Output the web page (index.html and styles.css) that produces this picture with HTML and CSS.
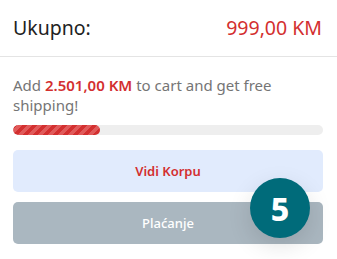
FILE: index.html
```html
<!DOCTYPE html>
<html lang="en">
<head>
  <meta charset="UTF-8" />
  <meta name="viewport" content="width=device-width, initial-scale=1.0"/>
  <title>Korpa</title>
  <link rel="stylesheet" href="styles.css">
</head>
<body>

<div class="cart-summary">
  <header class="total-row">
    <span class="total-label">Ukupno:</span>
    <span class="total-price">999,00 KM</span>
  </header>

  <div class="cart-body">
    <p class="shipping-note">Add <strong>2.501,00 KM</strong> to cart and get free shipping!</p>

    <div class="progress">
      <div class="progress-fill" style="width: 28%"></div>
    </div>

    <div class="actions">
      <a href="#" class="btn btn-cart">Vidi Korpu</a>
      <a href="#" class="btn btn-checkout">Plaćanje</a>
    </div>
  </div>
</div>

<div class="step-badge">5</div>

</body>
</html>
```

FILE: styles.css
```css
body {
  margin: 0;
  font-family: 'Noto Sans', sans-serif;
  background: #fff;
  color: #333;
}

.total-row {
  display: flex;
  justify-content: space-between;
  align-items: center;
  height: 56px;
  padding: 0 15px 0 13px;
  border-bottom: 1px solid #e4e4e4;
  font-size: 19.5px;
  line-height: 24px;
}

.total-label {
  color: #222;
}

.total-price {
  color: #d32f2f;
}

.cart-body {
  padding: 18px 14px 0 13px;
}

.shipping-note {
  margin: 0;
  font-size: 15px;
  line-height: 20px;
  color: #757575;
}

.shipping-note strong {
  color: #d32f2f;
  font-weight: 600;
}

.progress {
  height: 10px;
  margin-top: 10px;
  border-radius: 5px;
  background-color: #eeeeee;
  overflow: hidden;
}

.progress-fill {
  height: 100%;
  border-radius: 5px;
  background-color: #d32f2f;
  background-image: repeating-linear-gradient(135deg, #d32f2f 0, #d32f2f 3.5px, #e05a5a 3.5px, #e05a5a 7px);
}

.actions {
  display: flex;
  flex-direction: column;
  gap: 10px;
  margin-top: 15px;
}

.btn {
  display: flex;
  align-items: center;
  justify-content: center;
  height: 42px;
  border-radius: 5px;
  font-size: 13px;
  text-decoration: none;
}

.btn-cart {
  background-color: #e1ebfd;
  color: #d32f2f;
  font-weight: 600;
}

.btn-checkout {
  background-color: #aab7c0;
  color: #fff;
  font-weight: 500;
}

.step-badge {
  position: absolute;
  left: 250px;
  top: 178px;
  width: 60px;
  height: 60px;
  border-radius: 50%;
  background-color: #006b7a;
  color: #fff;
  font-size: 32px;
  font-weight: 800;
  display: flex;
  align-items: center;
  justify-content: center;
  box-shadow: 0 8px 24px rgba(0, 0, 0, 0.12);
}
```
